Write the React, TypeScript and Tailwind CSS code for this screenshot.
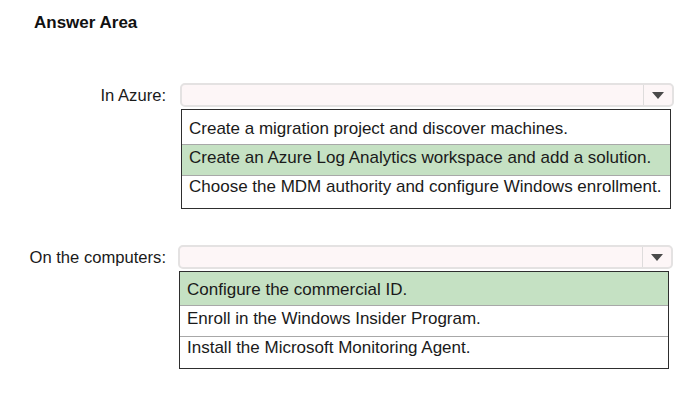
import React from "react";

type Row = { text: string; green?: boolean; h: number; pt: number };

function Arrow() {
  return (
    <svg width="12" height="7" viewBox="0 0 12 7" className="block">
      <polygon points="0,0 12,0 6,7" fill="#4a4a4a" />
    </svg>
  );
}

function Dropdown({ rows, selW, listW, listMl }: { rows: Row[]; selW: number; listW: number; listMl: number }) {
  return (
    <div className="flex flex-col">
      <div
        className="flex h-[24px] rounded-[5px] border-[2px] border-[#e4e2e2] bg-[#fdf6f7]"
        style={{ width: selW }}
      >
        <div className="flex-1" />
        <div className="flex w-[29px] items-center justify-center border-l border-[#dedcdc]">
          <Arrow />
        </div>
      </div>
      <div
        className="mt-[2px] flex flex-col border border-[#2e2e2e] bg-white"
        style={{ width: listW, marginLeft: listMl }}
      >
        {rows.map((r, i) => (
          <div
            key={i}
            className={
              (r.green ? "bg-[#c5e1c3] " : "bg-white ") +
              (i < rows.length - 1 ? "border-b border-[#a8a8a8] " : "") +
              "whitespace-nowrap pl-[7px] text-[17px] leading-[19px] text-[#1a1a1a]"
            }
            style={{ height: r.h, paddingTop: r.pt }}
          >
            {r.text}
          </div>
        ))}
      </div>
    </div>
  );
}

export default function App() {
  return (
    <div
      className="relative h-[399px] w-[693px] overflow-hidden bg-white"
      style={{ fontFamily: '"Liberation Sans", Arial, sans-serif' }}
    >
      <div className="pl-[34px] pt-[13px] text-[17px] font-bold leading-[20px] text-[#111]">Answer Area</div>

      <div className="mt-[50px] flex">
        <div className="w-[166px] pt-[4px] text-right text-[16.6px] leading-[18px] text-[#1a1a1a]">In Azure:</div>
        <div className="ml-[14px]">
          <Dropdown
            selW={494}
            listW={490}
            listMl={1}
            rows={[
              { text: "Create a migration project and discover machines.", h: 35, pt: 9 },
              { text: "Create an Azure Log Analytics workspace and add a solution.", green: true, h: 31, pt: 3 },
              { text: "Choose the MDM authority and configure Windows enrollment.", h: 32, pt: 1 },
            ]}
          />
        </div>
      </div>

      <div className="mt-[36px] flex">
        <div className="w-[166px] pt-[4px] text-right text-[16.6px] leading-[18px] text-[#1a1a1a]">On the computers:</div>
        <div className="ml-[12px]">
          <Dropdown
            selW={495}
            listW={490}
            listMl={1}
            rows={[
              { text: "Configure the commercial ID.", green: true, h: 34, pt: 8 },
              { text: "Enroll in the Windows Insider Program.", h: 31, pt: 3 },
              { text: "Install the Microsoft Monitoring Agent.", h: 31, pt: 1 },
            ]}
          />
        </div>
      </div>
    </div>
  );
}
